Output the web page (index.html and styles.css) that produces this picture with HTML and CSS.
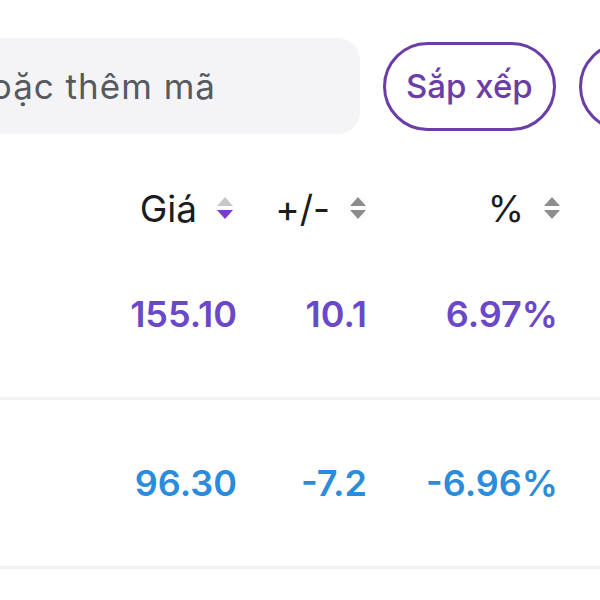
FILE: index.html
```html
<!DOCTYPE html>
<html lang="vi">
<head>
    <meta charset="UTF-8">
    <meta name="viewport" content="width=device-width, initial-scale=1.0">
    <title>Danh mục</title>
    <link rel="stylesheet" href="styles.css">
</head>
<body>

    <div class="toolbar">
        <div class="search">Tìm kiếm hoặc thêm mã</div>
        <button class="pill">Sắp xếp</button>
        <button class="pill">Lọc</button>
    </div>

    <div class="table">
        <div class="row head">
            <div class="cell"></div>
            <div class="cell">Giá <span class="sort desc"></span></div>
            <div class="cell">+/- <span class="sort"></span></div>
            <div class="cell">% <span class="sort"></span></div>
        </div>
        <div class="row line up">
            <div class="cell"></div>
            <div class="cell">155.10</div>
            <div class="cell">10.1</div>
            <div class="cell">6.97%</div>
        </div>
        <div class="row line down">
            <div class="cell"></div>
            <div class="cell">96.30</div>
            <div class="cell">-7.2</div>
            <div class="cell">-6.96%</div>
        </div>
    </div>

</body>
</html>
```

FILE: styles.css
```css
body {
    margin: 0;
    font-family: Inter, "Noto Sans", sans-serif;
    background-color: #fff;
    overflow: hidden;
    width: 600px;
    height: 600px;
}
.toolbar {
    display: flex;
    align-items: center;
    gap: 23px;
    margin-top: 38px;
    margin-left: -240px;
    height: 96px;
}
.search {
    flex: none;
    width: 600px;
    height: 96px;
    background: #f4f4f7;
    border-radius: 22px;
    display: flex;
    align-items: center;
    justify-content: flex-end;
    padding-right: 144px;
    box-sizing: border-box;
    font-size: 35px;
    letter-spacing: 1px;
    color: #56595e;
    white-space: nowrap;
}
.pill {
    flex: none;
    height: 89px;
    padding: 0 20px;
    background: #fff;
    border: 3px solid #6a3ea6;
    border-radius: 45px;
    font-family: inherit;
    font-size: 33px;
    font-weight: 500;
    color: #6a3ea6;
}
.row {
    display: grid;
    grid-template-columns: 1fr 100px 130px 191px;
    padding-right: 42px;
    align-items: center;
}
.cell {
    display: flex;
    justify-content: flex-end;
    align-items: center;
    gap: 20px;
}
.head {
    margin-top: 51px;
    height: 46px;
    font-size: 37px;
    color: #1c1c1e;
}
.head .cell:nth-child(2) {
    margin-right: 4px;
}
.head .cell:nth-child(3) {
    margin-right: 1px;
}
.head .cell:nth-child(4) {
    margin-right: -2px;
}
.line {
    height: 166px;
    border-bottom: 3px solid #f2f2f2;
    font-size: 36px;
    font-weight: 600;
}
.up {
    color: #6a48c7;
}
.down {
    color: #2b8cdb;
}
.sort {
    width: 16px;
    height: 22px;
    position: relative;
}
.sort::before,
.sort::after {
    content: "";
    position: absolute;
    left: 0;
    border-left: 8px solid transparent;
    border-right: 8px solid transparent;
}
.sort::before {
    top: 0;
    border-bottom: 9px solid #8c8c8c;
}
.sort::after {
    bottom: 0;
    border-top: 9px solid #8c8c8c;
}
.sort.desc::before {
    border-bottom-color: #c5c8c8;
}
.sort.desc::after {
    border-top-color: #7a3cc8;
}
```
